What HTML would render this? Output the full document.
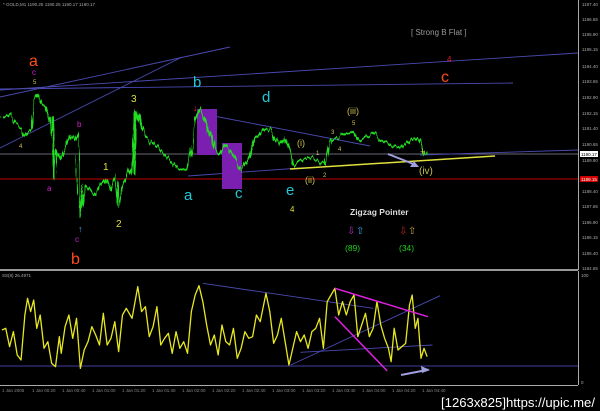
<!DOCTYPE html>
<html><head><meta charset="utf-8"><style>
html,body{margin:0;padding:0;background:#000;width:600px;height:411px;overflow:hidden}
svg{display:block}
text{font-family:"Liberation Sans",sans-serif}
</style></head><body>
<svg width="600" height="411" viewBox="0 0 600 411" xmlns="http://www.w3.org/2000/svg">
<defs>
<filter id="jit" x="-5%" y="-20%" width="110%" height="140%">
<feTurbulence type="fractalNoise" baseFrequency="0.35 0.02" numOctaves="2" seed="3" result="n"/>
<feDisplacementMap in="SourceGraphic" in2="n" scale="9" xChannelSelector="R" yChannelSelector="G"/>
</filter>
</defs>
<rect width="600" height="411" fill="#000"/>
<text x="3" y="6" font-size="4.5" fill="#aaa">* GOLD,M1  1190.25 1190.25 1190.17 1190.17</text>
<line x1="0" y1="154" x2="578" y2="154" stroke="#8a8a9a" stroke-width="0.8"/>
<line x1="0" y1="179" x2="578" y2="179" stroke="#c00000" stroke-width="1"/>
<g stroke="#4a4ab0" stroke-width="0.9" fill="none">
<line x1="0" y1="97" x2="230" y2="47"/>
<line x1="0" y1="148" x2="182" y2="57"/>
<line x1="0" y1="90" x2="578" y2="53"/>
<line x1="0" y1="89" x2="513" y2="83"/>
<line x1="198" y1="113" x2="370" y2="146"/>
<line x1="188" y1="176" x2="300" y2="168"/>
<line x1="420" y1="155" x2="578" y2="150"/>
</g>
<rect x="197" y="109" width="20" height="46" fill="#7a1fb0"/>
<rect x="222" y="143" width="20" height="46" fill="#7a1fb0"/>
<line x1="290" y1="169" x2="495" y2="156" stroke="#e0e040" stroke-width="1.5"/>
<g filter="url(#jit)">
<polyline fill="none" stroke="#22dd22" stroke-width="1.8" stroke-linejoin="round" points="2,118 10,115 15,122 22,128 24,135 30,128 34,100 38,95 42,105 46,108 50,122 52,118 54,178 56,150 60,160 65,148 70,135 75,140 78,133 80,218 85,185 90,190 95,195 100,185 105,180 110,190 115,175 118,208 122,190 126,180 130,170 133,175 136,110 140,125 145,135 150,140 155,145 160,150 165,155 170,160 175,165 180,170 187,168 192,150 196,118 200,110 205,120 210,135 215,150 220,155 225,145 230,150 235,160 240,170 245,165 250,155 255,140 260,135 265,128 270,130 275,140 280,145 285,138 290,150 292,165 295,163 300,160 310,158 320,162 325,165 330,140 340,137 350,132 355,130 360,140 370,135 375,133 380,140 390,145 400,148 410,140 415,138 420,142 425,155"/>
</g>
<line x1="388" y1="154" x2="416" y2="165" stroke="#a0a0e0" stroke-width="2"/>
<polygon points="419,167 410,167 414,161" fill="#a0a0e0"/>
<g font-size="16" fill="#ff4a1a"><text x="29" y="66">a</text><text x="71" y="264">b</text><text x="441" y="82">c</text></g>
<g font-size="8" fill="#d020d0"><text x="32" y="75">c</text><text x="77" y="127">b</text><text x="47" y="191">a</text><text x="75" y="242">c</text></g>
<text x="33" y="84" font-size="6" fill="#d0c050">5</text>
<text x="19" y="148" font-size="6" fill="#d0c050">4</text>
<g font-size="10" fill="#e0e040"><text x="103" y="170">1</text><text x="116" y="227">2</text><text x="131" y="102">3</text><text x="290" y="212" font-size="8">4</text></g>
<g font-size="15" fill="#20c8d8"><text x="193" y="87">b</text><text x="262" y="102">d</text><text x="184" y="200">a</text><text x="235" y="198">c</text><text x="286" y="195">e</text></g>
<text x="78" y="232" font-size="9" fill="#3ab0ff">↑</text>
<text x="193" y="111" font-size="9" fill="#ff2020">↓</text>
<g font-size="9" fill="#c8c050"><text x="297" y="146">(i)</text><text x="305" y="183">(ii)</text><text x="347" y="114">(iii)</text><text x="419" y="174" font-size="10">(iv)</text></g>
<g font-size="6" fill="#d0c050"><text x="316" y="155">1</text><text x="323" y="177">2</text><text x="331" y="134">3</text><text x="338" y="151">4</text><text x="352" y="125">5</text></g>
<text x="420" y="155" font-size="9" fill="#e0e040">+</text>
<text x="411" y="35" font-size="8" fill="#999">[ Strong B Flat ]</text>
<text x="447" y="62" font-size="8" fill="#e02020">4</text>
<text x="350" y="215" font-size="8.5" font-weight="bold" fill="#ddd">Zigzag Pointer</text>
<g font-size="10"><text x="347" y="234" fill="#b030c0">⇩</text><text x="356" y="234" fill="#30a0e0">⇧</text><text x="399" y="234" fill="#c02020">⇩</text><text x="408" y="234" fill="#c0a040">⇧</text></g>
<g font-size="8.5" fill="#20d020"><text x="345" y="251">(89)</text><text x="399" y="251">(34)</text></g>
<line x1="578.5" y1="0" x2="578.5" y2="270" stroke="#aaa" stroke-width="1"/>
<g font-size="4.5" fill="#aaa">
<text x="582" y="6">1197.40</text><text x="582" y="21">1196.65</text><text x="582" y="36">1195.90</text><text x="582" y="51">1195.15</text><text x="582" y="68">1194.40</text><text x="582" y="83">1193.65</text><text x="582" y="99">1192.90</text><text x="582" y="115">1192.15</text><text x="582" y="130">1191.40</text><text x="582" y="146">1190.65</text><text x="582" y="162">1189.90</text><text x="582" y="193">1188.40</text><text x="582" y="208">1187.65</text><text x="582" y="224">1186.90</text><text x="582" y="239">1186.15</text><text x="582" y="255">1185.40</text><text x="582" y="270">1184.65</text>
</g>
<rect x="580" y="151" width="18" height="6" fill="#fff"/><text x="581" y="156" font-size="4.5" fill="#000">1190.17</text>
<rect x="580" y="176" width="18" height="6" fill="#d00000"/><text x="581" y="181" font-size="4.5" fill="#fff">1189.15</text>
<rect x="0" y="269" width="578" height="2" fill="#999"/>
<line x1="578.5" y1="271" x2="578.5" y2="385" stroke="#aaa"/>
<line x1="0" y1="385.5" x2="578" y2="385.5" stroke="#aaa"/>
<text x="2" y="277" font-size="4.5" fill="#aaa">SS(8) 26.4971</text>
<text x="581" y="277" font-size="4.5" fill="#aaa">100</text>
<text x="581" y="384" font-size="4.5" fill="#aaa">0</text>
<line x1="0" y1="366" x2="578" y2="366" stroke="#4040a0" stroke-width="0.9"/>
<g transform="translate(0,265) scale(0.3827,0.3333)" fill="none">
<g stroke="#4a4ab0" stroke-width="0.9">
<line x1="530" y1="55" x2="975" y2="130" vector-effect="non-scaling-stroke"/>
<line x1="760" y1="300" x2="1150" y2="92" vector-effect="non-scaling-stroke"/>
<line x1="785" y1="262" x2="1130" y2="240" vector-effect="non-scaling-stroke"/>
</g>
<polyline stroke="#e8e820" stroke-width="1.3" vector-effect="non-scaling-stroke" stroke-linejoin="round" points="5,195 15,190 25,245 35,200 45,270 55,285 65,150 72,100 80,140 88,105 96,190 105,150 115,250 125,230 135,295 145,305 155,215 160,265 170,185 180,150 190,220 200,160 210,310 220,255 230,230 240,185 250,210 260,240 270,145 280,240 290,220 300,170 310,260 320,150 330,130 345,160 360,65 370,140 380,125 390,215 400,185 410,125 420,240 430,220 440,205 450,265 460,200 470,250 480,230 490,265 500,140 510,90 520,62 530,110 540,180 550,240 560,210 570,270 580,180 590,230 600,240 610,190 620,280 630,250 640,200 650,220 660,215 670,150 680,170 695,85 705,140 715,235 725,210 735,160 745,230 755,300 765,250 775,200 785,230 795,210 805,250 815,200 825,190 835,160 845,250 855,110 865,90 875,70 885,150 895,110 905,150 915,110 925,90 935,215 945,180 955,145 965,215 975,190 985,110 995,180 1005,220 1015,250 1022,290 1030,190 1040,255 1050,245 1060,235 1070,120 1077,90 1085,190 1092,160 1100,280 1108,250 1116,275"/>
<line x1="875" y1="70" x2="1118" y2="155" stroke="#e020e0" stroke-width="1.5" vector-effect="non-scaling-stroke"/>
<line x1="875" y1="155" x2="1012" y2="318" stroke="#e020e0" stroke-width="1.5" vector-effect="non-scaling-stroke"/>
<line x1="1048" y1="330" x2="1120" y2="314" stroke="#a0a0e0" stroke-width="2" vector-effect="non-scaling-stroke"/>
</g>
<polygon points="430,370 421,366 422,373" fill="#a0a0e0"/>
<g font-size="4.5" fill="#888">
<text x="2" y="392">1 Jan 2005</text><text x="32" y="392">1 Jan 00:20</text><text x="62" y="392">1 Jan 00:40</text><text x="92" y="392">1 Jan 01:00</text><text x="122" y="392">1 Jan 01:20</text><text x="152" y="392">1 Jan 01:40</text><text x="182" y="392">1 Jan 02:00</text><text x="212" y="392">1 Jan 02:20</text><text x="242" y="392">1 Jan 02:40</text><text x="272" y="392">1 Jan 03:00</text><text x="302" y="392">1 Jan 03:20</text><text x="332" y="392">1 Jan 03:40</text><text x="362" y="392">1 Jan 04:00</text><text x="392" y="392">1 Jan 04:20</text><text x="422" y="392">1 Jan 04:40</text>
</g>
<text x="441" y="407" font-size="13" fill="#fff" font-family="Liberation Mono,monospace" textLength="154" lengthAdjust="spacingAndGlyphs">[1263x825]https://upic.me/</text>
</svg>
</body></html>
